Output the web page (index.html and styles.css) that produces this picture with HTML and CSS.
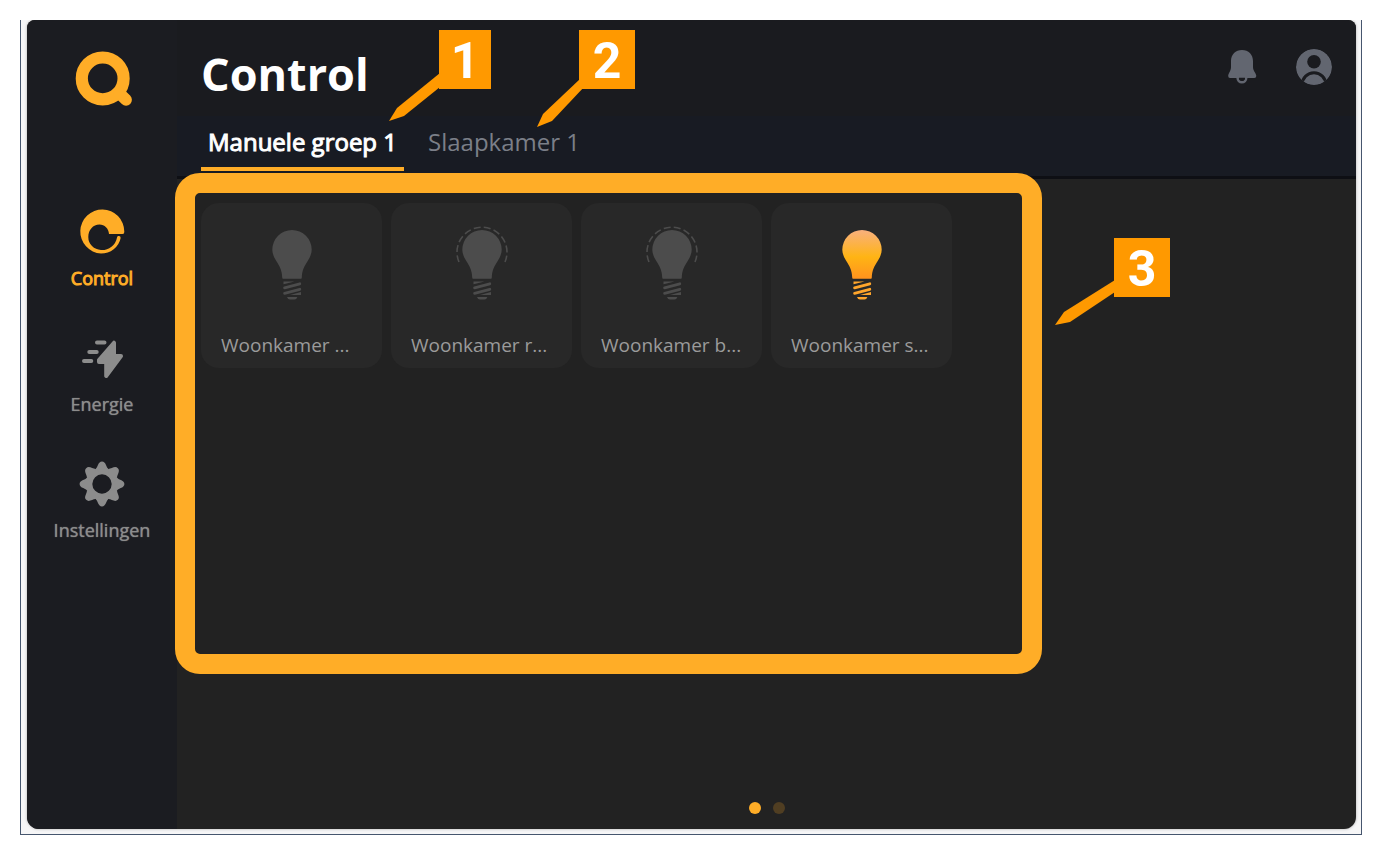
FILE: index.html
```html
<!DOCTYPE html>
<html lang="nl">

<head>
    <meta charset="UTF-8">
    <meta name="viewport" content="width=device-width, initial-scale=1.0">
    <title>Control</title>
    <link rel="stylesheet" href="styles.css">
</head>

<body>
    <!-- Shared shapes for the icons -->
    <svg class="defs" aria-hidden="true">
        <defs>
            <linearGradient id="glow" gradientUnits="userSpaceOnUse" x1="0" y1="7" x2="0" y2="56">
                <stop offset="0" stop-color="#f8b07e" />
                <stop offset="0.55" stop-color="#ffb414" />
                <stop offset="1" stop-color="#ff921e" />
            </linearGradient>
            <path id="bulb-glass" d="M18 55.7Q17.3 55.7 17.2 54.5C17 47 14.5 43 11 37.5C8.5 33.5 7.3 30 7.3 26.7A19.7 19.7 0 0 1 46.7 26.7C46.7 30 45.5 33.5 43 37.5C39.5 43 37 47 36.8 54.5Q36.7 55.7 36 55.7z" />
            <g id="bulb-base">
                <path d="M18.5 58.5H29.5L18.5 61.3zM36 72H25L36 69zM22 74H32.4Q31.5 76.6 29.5 76.6H25Q22.8 76.6 22 74z" />
                <path d="M19.6 64.8L34.8 60.8M19.6 70.3L34.8 66.3" fill="none" stroke="currentColor" stroke-width="2.8" stroke-linecap="round" />
            </g>
            <path id="bulb-ring" d="M4 39A25 25 0 1 1 50 39" fill="none" stroke="currentColor" stroke-width="1.6" stroke-dasharray="7 3.2" />
            <path id="tooth" d="M-6.3 -15C-4 -17 -4 -22.4 0 -22.4S4 -17 6.3 -15L0 -10z" />
        </defs>
    </svg>

    <div class="frame">
        <div class="panel">
            <aside class="sidebar">
                <svg class="logo" viewBox="0 0 60 56" aria-hidden="true">
                    <circle cx="30.7" cy="27.4" r="20.9" fill="none" stroke="currentColor" stroke-width="12.2" />
                    <path d="M47 42L54 48.8" stroke="currentColor" stroke-width="11.8" stroke-linecap="round" />
                </svg>
                <nav class="nav">
                    <a href="#" class="nav-item active">
                        <svg viewBox="0 -1 46 46" aria-hidden="true">
                            <path d="M30 24H43.5Q45.6 24 45.3 21.5A22 22 0 1 0 22 43.5A20 19 0 0 0 41.6 28.2A1.8 1.8 0 0 0 38 27.4A15.5 15 0 0 1 22 40A13 13 0 0 1 9.3 27C9.3 20 14 14.5 20.5 14.5C25.5 14.5 29.7 18.5 30 24z" />
                        </svg>
                        <span>Control</span>
                    </a>
                    <a href="#" class="nav-item">
                        <svg viewBox="0 0 46 46" aria-hidden="true">
                            <path d="M18 7.4H25.5M10.3 17H17.7M5 26H12.3" stroke="currentColor" stroke-width="4" stroke-linecap="round" />
                            <path d="M35 7.7V21H42L27.2 41V27H20V25z" stroke="currentColor" stroke-width="4" stroke-linejoin="round" />
                        </svg>
                        <span>Energie</span>
                    </a>
                    <a href="#" class="nav-item">
                        <svg viewBox="-23 -23 46 46" aria-hidden="true">
                            <circle r="13" fill="none" stroke="currentColor" stroke-width="6.6" />
                            <use href="#tooth" />
                            <use href="#tooth" transform="rotate(45)" />
                            <use href="#tooth" transform="rotate(90)" />
                            <use href="#tooth" transform="rotate(135)" />
                            <use href="#tooth" transform="rotate(180)" />
                            <use href="#tooth" transform="rotate(225)" />
                            <use href="#tooth" transform="rotate(270)" />
                            <use href="#tooth" transform="rotate(315)" />
                        </svg>
                        <span>Instellingen</span>
                    </a>
                </nav>
            </aside>

            <main class="main">
                <header class="header">
                    <h1>Control</h1>
                    <div class="actions">
                        <button type="button" class="icon-btn" aria-label="Meldingen">
                            <svg width="30" height="36" viewBox="0 0 30 36" aria-hidden="true">
                                <path d="M15 1C21.5 1 26 5.5 26 12V18C26 22 29.3 24.5 29.3 27Q29.3 29 27.3 29H3Q1.2 29 1.2 27C1.2 24.5 4 22 4 18V12C4 5.5 8.5 1 15 1z" />
                                <path d="M10.6 29A4.3 4.3 0 0 0 19.2 29" fill="none" stroke="currentColor" stroke-width="2.5" />
                                <path d="M12 28.8H18A3 3 0 0 1 12 28.8z" class="cut" />
                            </svg>
                        </button>
                        <button type="button" class="icon-btn" aria-label="Profiel">
                            <svg width="36" height="36" viewBox="0 0 36 36" aria-hidden="true">
                                <clipPath id="avatar">
                                    <circle cx="18" cy="18" r="18" />
                                </clipPath>
                                <g clip-path="url(#avatar)">
                                    <circle cx="18" cy="18" r="18" />
                                    <circle cx="18" cy="12.7" r="6.8" class="cut" />
                                    <circle cx="18" cy="35.5" r="11.8" class="cut-line" />
                                </g>
                            </svg>
                        </button>
                    </div>
                </header>

                <div class="tabs">
                    <button type="button" class="tab active">Manuele groep 1</button>
                    <button type="button" class="tab">Slaapkamer 1</button>
                </div>

                <section class="content">
                    <div class="tiles">
                        <button type="button" class="tile">
                            <svg viewBox="0 0 54 78" aria-hidden="true">
                                <use href="#bulb-glass" />
                                <use href="#bulb-base" />
                            </svg>
                            <span>Woonkamer ...</span>
                        </button>
                        <button type="button" class="tile">
                            <svg viewBox="0 0 54 78" aria-hidden="true">
                                <use href="#bulb-ring" />
                                <use href="#bulb-glass" />
                                <use href="#bulb-base" />
                            </svg>
                            <span>Woonkamer r...</span>
                        </button>
                        <button type="button" class="tile">
                            <svg viewBox="0 0 54 78" aria-hidden="true">
                                <use href="#bulb-ring" />
                                <use href="#bulb-glass" />
                                <use href="#bulb-base" />
                            </svg>
                            <span>Woonkamer b...</span>
                        </button>
                        <button type="button" class="tile on">
                            <svg viewBox="0 0 54 78" aria-hidden="true">
                                <use href="#bulb-glass" fill="url(#glow)" />
                                <use href="#bulb-base" />
                            </svg>
                            <span>Woonkamer s...</span>
                        </button>
                    </div>
                    <div class="pager">
                        <button type="button" class="dot active" aria-label="Pagina 1"></button>
                        <button type="button" class="dot" aria-label="Pagina 2"></button>
                    </div>
                    <div class="highlight"></div>
                </section>
            </main>

            <!-- Numbered markers that lie over the panel -->
            <div class="callout callout-1">
                <svg width="51" height="48" viewBox="0 0 51 48" aria-hidden="true">
                    <path d="M51 0V14L15 43L0 48L8 35z" />
                </svg>
                <span>1</span>
            </div>
            <div class="callout callout-2">
                <svg width="48" height="50" viewBox="0 0 48 50" aria-hidden="true">
                    <path d="M43 2H48V9L15 44L0 50L6 37z" />
                </svg>
                <span>2</span>
            </div>
            <div class="callout callout-3">
                <svg width="60" height="46" viewBox="0 0 60 46" aria-hidden="true">
                    <path d="M60 0V12L15 42L0 45L9 32z" />
                </svg>
                <span>3</span>
            </div>
        </div>
    </div>
</body>

</html>
```
FILE: styles.css
```css
* {
    box-sizing: border-box;
}

body {
    margin: 0;
    padding: 20px;
    height: 100vh;
    background: white;
    font-family: "Open Sans", sans-serif;
}

button {
    padding: 0;
    border: none;
    background: none;
    color: inherit;
    font-family: inherit;
    cursor: pointer;
}

svg {
    display: block;
    fill: currentColor;
}

.defs {
    position: absolute;
    width: 0;
    height: 0;
}

.frame {
    height: 100%;
    padding: 0 5px 5px 6px;
    border: 1px solid #46566e;
    border-top: none;
    background: #f6f6f7;
}

.panel {
    position: relative;
    display: flex;
    height: 100%;
    border-radius: 8px 8px 12px 12px;
    background: #222222;
    box-shadow: 0 0 3px rgba(0, 0, 0, 0.3);
    clip-path: inset(0 -5px -5px -5px);
}

/* Sidebar */
.sidebar {
    display: flex;
    flex-direction: column;
    align-items: center;
    flex: 0 0 150px;
    padding-top: 31px;
    border-radius: 8px 0 0 12px;
    background: #1b1c21;
}

.logo {
    width: 60px;
    height: 56px;
    color: #ffad27;
}

.nav {
    display: flex;
    flex-direction: column;
    gap: 43px;
    margin-top: 102px;
}

.nav-item {
    display: flex;
    flex-direction: column;
    align-items: center;
    gap: 9px;
    color: #8c8c8c;
    font-size: 18px;
    line-height: 28px;
    text-decoration: none;
    text-shadow: 0 0 1px currentColor;
}

.nav-item svg {
    width: 46px;
    height: 46px;
}

.nav-item.active {
    color: #ffad27;
    text-shadow: none;
    -webkit-text-stroke: 1px currentColor;
}

/* Header */
.main {
    display: flex;
    flex-direction: column;
    flex: 1;
    min-width: 0;
}

.header {
    display: flex;
    justify-content: space-between;
    height: 96px;
    padding: 24px 24px 0;
    border-radius: 0 8px 0 0;
    background: #1a1b1f;
}

h1 {
    margin: 0;
    color: white;
    font-size: 45px;
    font-weight: 700;
    line-height: 60px;
}

.actions {
    display: flex;
    align-items: flex-start;
    gap: 39px;
    padding-top: 5px;
    color: #626670;
}

.cut {
    fill: #1a1b1f;
}

.cut-line {
    fill: none;
    stroke: #1a1b1f;
    stroke-width: 3;
}

.tabs {
    display: flex;
    gap: 17px;
    padding: 0 24px 5px;
    border-bottom: 3px solid #0e0f14;
    background: #181b23;
}

.tab {
    padding: 0 7px;
    border-bottom: 4px solid transparent;
    color: #7b7f88;
    font-size: 24px;
    line-height: 51px;
}

.tab.active {
    border-color: #ffad27;
    color: white;
    -webkit-text-stroke: 1px currentColor;
}

/* Tiles */
.content {
    position: relative;
    display: flex;
    flex-direction: column;
    justify-content: space-between;
    flex: 1;
    padding: 24px 24px 15px;
}

.tiles {
    display: grid;
    grid-template-columns: repeat(auto-fill, 181px);
    gap: 9px;
}

.tile {
    display: flex;
    flex-direction: column;
    align-items: center;
    gap: 30px;
    padding: 20px 20px 9px;
    border-radius: 18px;
    background: #282828;
    color: #4c4c4c;
}

.tile svg {
    width: 54px;
    height: 78px;
}

.tile span {
    align-self: flex-start;
    color: #9b9b9b;
    font-size: 19px;
    line-height: 28px;
    white-space: nowrap;
}

.tile.on {
    color: #ffa52b;
}

.pager {
    display: flex;
    justify-content: center;
    gap: 12px;
}

.dot {
    width: 12px;
    height: 12px;
    border-radius: 50%;
    background: #503e22;
}

.dot.active {
    background: #ffad27;
}

/* Markers */
.highlight {
    position: absolute;
    top: -6px;
    left: -2px;
    width: 867px;
    height: 501px;
    border: 20px solid #ffad27;
    border-radius: 25px;
    pointer-events: none;
}

.callout {
    position: absolute;
    display: flex;
    align-items: center;
    justify-content: center;
    width: 56px;
    height: 59px;
    padding-top: 3px;
    background: #ff9900;
    color: white;
    font-family: Roboto, Arial, sans-serif;
    font-size: 50px;
    font-weight: 700;
    line-height: 56px;
}

.callout svg {
    position: absolute;
    color: #ff9900;
}

.callout-1 {
    top: 10px;
    left: 412px;
    width: 52px;
}

.callout-1 svg {
    top: 43px;
    right: 51px;
}

.callout-2 {
    top: 10px;
    left: 552px;
}

.callout-2 svg {
    top: 47px;
    right: 50px;
}

.callout-3 {
    top: 218px;
    left: 1087px;
}

.callout-3 svg {
    top: 42px;
    right: 55px;
}
```
